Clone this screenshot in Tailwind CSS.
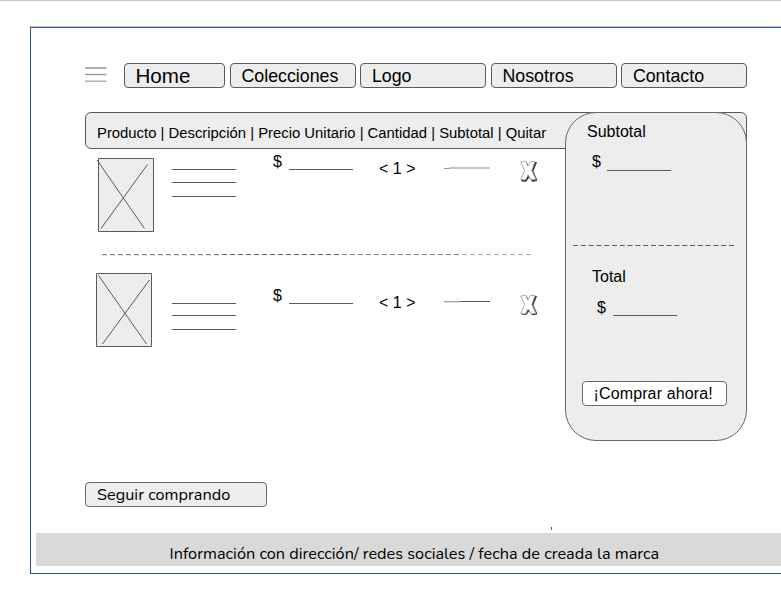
<!DOCTYPE html>
<html lang="es">
<head>
<meta charset="utf-8">
<title>Carrito de compras</title>
<script src="https://cdn.jsdelivr.net/npm/@tailwindcss/browser@4"></script>
</head>
<body class="h-[601px] w-[781px] overflow-hidden border-t border-[#c9c9c9] bg-white font-['Liberation_Sans',Arial,sans-serif] text-black">
<main class="mt-[26px] ml-[30px] flex h-[547px] w-[760px] flex-col border border-[#2f528f] pl-[54px] shadow-[0_-1px_0_#c3cde0]">
  <nav class="mt-[35px] flex h-[25px] text-[17.8px] leading-[24px]">
    <svg class="mr-[17px] h-[25px] w-[22px] shrink-0" viewBox="0 0 22 25" fill="none" stroke-width="1.4"><path d="M0 5H21.500" stroke="#8b8b8b"/><path d="M0 11.500H21.500" stroke="#999"/><path d="M0 18.200H21.500" stroke="#aaa"/></svg>
    <a class="mr-[5px] w-[101px] shrink-0 rounded-[4px] border border-[#5a5a5a] bg-[#ededed] pl-[10.500px] text-[20.6px]">Home</a>
    <a class="mr-[4.400px] w-[126px] shrink-0 rounded-[4px] border border-[#5a5a5a] bg-[#ededed] pl-[10.500px]">Colecciones</a>
    <a class="mr-[4.600px] w-[126px] shrink-0 rounded-[4px] border border-[#5a5a5a] bg-[#ededed] pl-[10.500px]">Logo</a>
    <a class="mr-[4.400px] w-[126px] shrink-0 rounded-[4px] border border-[#5a5a5a] bg-[#ededed] pl-[10.500px]">Nosotros</a>
    <a class="w-[126px] shrink-0 rounded-[4px] border border-[#5a5a5a] bg-[#ededed] pl-[10.500px]">Contacto</a>
  </nav>

  <div class="mt-[24px] grid h-[370px] w-[662px] grid-cols-[480px_182px] grid-rows-[37px_1fr]">
    <header class="col-span-2 col-start-1 row-start-1 rounded-[6px] border border-[#5a5a5a] bg-[#ededed] pl-[11px] text-[14.85px] leading-[40px] whitespace-nowrap">Producto | Descripción | Precio Unitario | Cantidad | Subtotal | Quitar</header>

    <section class="col-start-1 row-start-2 text-[16px] leading-[20px]">
      <article class="flex h-[105px] items-start pt-[9px] pl-[11px]">
        <svg class="h-[74px] w-[58px] shrink-0" viewBox="0 0 58 74" fill="none" stroke="#5a5a5a"><path d="M2.500.500H57.500V73.500H2.500Z" fill="#ededed"/><path d="M1 2L48.500 70.500M51.500 6.500L5 70.500"/></svg>
        <div class="mt-[11px] ml-[18px] w-[64px] shrink-0">
          <hr class="border-[#5a5a5a]"><hr class="mt-[12px] border-[#5a5a5a]"><hr class="mt-[13px] border-[#5a5a5a]">
        </div>
        <span class="-mt-[6px] ml-[37px] w-[9px]">$</span>
        <hr class="mt-[11px] ml-[7px] w-[64px] border-[#5a5a5a]">
        <span class="mt-[1px] ml-[26px] w-[37px] whitespace-nowrap">&lt; 1 &gt;</span>
        <svg class="mt-[8px] ml-[28px] h-[4px] w-[46px]" viewBox="0 0 46 4" fill="none"><path d="M0 2.500H6" stroke="#999"/><path d="M5 2H46" stroke="#b5b5b5" stroke-width="1.600"/></svg>
        <svg class="mt-[2px] ml-[30px] h-[24px] w-[19px]" viewBox="0 0 19 24" stroke-linejoin="round"><path d="M2 3L6 2L9 7L11 2L16.500 2.500L13 11L17 20.500L12.500 21.500L9 17L6 21.500L1.500 21L6 11.500Z" fill="#333" stroke="#333" stroke-width=".8"/><path d="M.800 2L5.500 1L8 6L10.500 1.500L15 1.500L11.800 10.500L16 19.300L11.500 20L8 15L5.500 20L.800 19.500L4.500 10.500Z" fill="#fff" stroke="#999" stroke-width=".8"/></svg>
      </article>

      <svg class="ml-[17px] h-[2px] w-[432px]" viewBox="0 0 432 2" fill="none" stroke-dasharray="5 3"><path d="M0 .7H120" stroke="#8b8b8b" stroke-width="1.200"/><path d="M120 .5H240" stroke="#5a5a5a"/><path d="M240 .5H360" stroke="#858585"/><path d="M360 .2H431" stroke="#aaa" stroke-width="1.500"/></svg>

      <article class="flex h-[93px] items-start pt-[17px] pl-[11px]">
        <svg class="h-[74px] w-[56px] shrink-0" viewBox="0 0 56 74" fill="none" stroke="#5a5a5a"><path d="M.500.500H55.500V73.500H.500Z" fill="#ededed"/><path d="M2.500 2.500L50.500 71M53.500 7L6.500 71"/></svg>
        <div class="mt-[30px] ml-[20px] w-[64px] shrink-0">
          <hr class="border-[#5a5a5a]"><hr class="mt-[11px] border-[#5a5a5a]"><hr class="mt-[13px] border-[#5a5a5a]">
        </div>
        <span class="mt-[13px] ml-[37px] w-[9px]">$</span>
        <hr class="mt-[30px] ml-[7px] w-[64px] border-[#5a5a5a]">
        <span class="mt-[20px] ml-[26px] w-[37px] whitespace-nowrap">&lt; 1 &gt;</span>
        <svg class="mt-[27px] ml-[28px] h-[4px] w-[46px]" viewBox="0 0 46 4" fill="none"><path d="M0 1.700H16" stroke="#999" stroke-width="1.200"/><path d="M16 1.500H46" stroke="#5a5a5a"/></svg>
        <svg class="mt-[21px] ml-[30px] h-[24px] w-[19px]" viewBox="0 0 19 24" stroke-linejoin="round"><path d="M2 3L6 2L9 7L11 2L16.500 2.500L13 11L17 20L12.500 21L9 17L6 20.700L1.500 20L6 11.500Z" fill="#333" stroke="#333" stroke-width=".8"/><path d="M.800 2L5.500 1L8 6L10.500 1.500L15 1.500L11.800 10.500L16 19.300L11.500 20L8 15L5.500 20L.800 19.500L4.500 10.500Z" fill="#fff" stroke="#999" stroke-width=".8"/></svg>
      </article>
    </section>

    <aside class="col-start-2 row-span-2 row-start-1 flex h-[329px] flex-col rounded-[31px] border border-[#6a6a6a] bg-[#ededed] text-[16px] leading-[20px]">
      <h2 class="mt-[9px] ml-[21px]">Subtotal</h2>
      <div class="mt-[10px] ml-[26px] flex items-end"><span class="w-[9px]">$</span><hr class="mb-[1px] ml-[6px] w-[64px] border-[#5a5a5a]"></div>
      <svg class="mt-[73px] ml-[7px] h-[1px] w-[162px] shrink-0" viewBox="0 0 162 1"><path d="M0 .5H161" stroke="#5a5a5a" stroke-dasharray="5 2.800"/></svg>
      <h2 class="mt-[21px] ml-[26px]">Total</h2>
      <div class="mt-[11px] ml-[31px] flex items-end"><span class="w-[9px]">$</span><hr class="mb-[2px] ml-[7px] w-[64px] border-[#5a5a5a]"></div>
      <button class="mt-[63px] ml-[16px] h-[25px] w-[145px] shrink-0 rounded-[4px] border border-[#6a6a6a] bg-white pl-[10.500px] text-left leading-[24px] tracking-[.13px] whitespace-nowrap">¡Comprar ahora!</button>
    </aside>
  </div>

  <a class="h-[25px] w-[182px] shrink-0 rounded-[4px] border border-[#6a6a6a] bg-[#ededed] pl-[11px] font-['Nunito','Noto_Sans',sans-serif] text-[16.3px] leading-[24px]">Seguir comprando</a>
  <div class="mt-[20px] ml-[466px] h-[3px] w-px shrink-0 bg-[#5a5a5a]"></div>
  <footer class="mt-[3px] -ml-[49px] h-[33px] shrink-0 bg-[#d9d9d9] pl-[133.500px] font-['Nunito','Noto_Sans',sans-serif] text-[16.3px] leading-[42px] whitespace-nowrap">Información con dirección/ redes sociales / fecha de creada la marca</footer>
</main>
</body>
</html>
